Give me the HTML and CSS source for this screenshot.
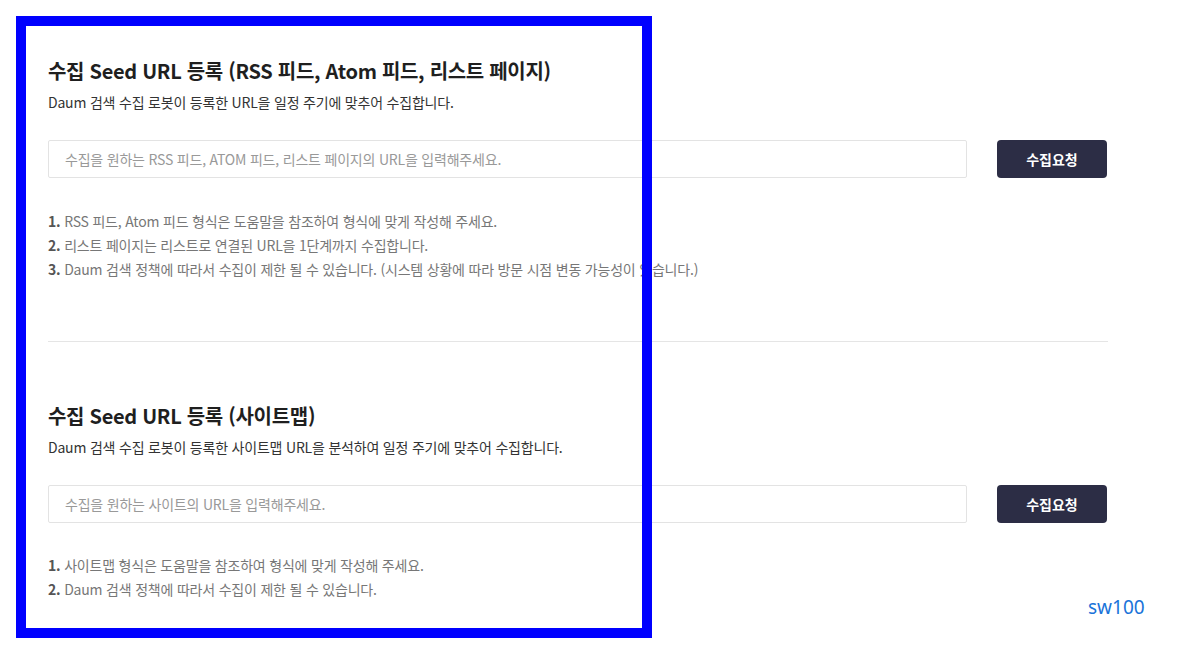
FILE: index.html
```html
<!DOCTYPE html>
<html lang="ko">
<head>
  <meta charset="UTF-8">
  <title>수집 Seed URL 등록</title>
  <link rel="stylesheet" href="styles.css">
</head>
<body>
<div class="wrap">
  <div class="section">
    <h2 class="tit">수집 Seed URL 등록 (RSS 피드, Atom 피드, 리스트 페이지)</h2>
    <p class="desc">Daum 검색 수집 로봇이 등록한 URL을 일정 주기에 맞추어 수집합니다.</p>
    <div class="form">
      <input class="inp" type="text" placeholder="수집을 원하는 RSS 피드, ATOM 피드, 리스트 페이지의 URL을 입력해주세요.">
      <button class="btn" type="button">수집요청</button>
    </div>
    <ol class="notes">
      <li><b>1.</b> RSS 피드, Atom 피드 형식은 도움말을 참조하여 형식에 맞게 작성해 주세요.</li>
      <li><b>2.</b> 리스트 페이지는 리스트로 연결된 URL을 1단계까지 수집합니다.</li>
      <li><b>3.</b> Daum 검색 정책에 따라서 수집이 제한 될 수 있습니다. (시스템 상황에 따라 방문 시점 변동 가능성이 있습니다.)</li>
    </ol>
  </div>
  <div class="section section2">
    <h2 class="tit">수집 Seed URL 등록 (사이트맵)</h2>
    <p class="desc">Daum 검색 수집 로봇이 등록한 사이트맵 URL을 분석하여 일정 주기에 맞추어 수집합니다.</p>
    <div class="form">
      <input class="inp" type="text" placeholder="수집을 원하는 사이트의 URL을 입력해주세요.">
      <button class="btn" type="button">수집요청</button>
    </div>
    <ol class="notes">
      <li><b>1.</b> 사이트맵 형식은 도움말을 참조하여 형식에 맞게 작성해 주세요.</li>
      <li><b>2.</b> Daum 검색 정책에 따라서 수집이 제한 될 수 있습니다.</li>
    </ol>
  </div>
</div>
<span class="tag">sw100</span>
<div class="mark"></div>
</body>
</html>
```
FILE: styles.css
```css
*{margin:0;padding:0;box-sizing:border-box;}
body{background:#fff;font-family:"Noto Sans CJK KR","Noto Sans",sans-serif;color:#222;}
.wrap{width:1060px;margin-left:48px;padding-top:56px;}
.section{border-bottom:1px solid #e5e5e5;padding-bottom:60px;}
.section2{border-bottom:0;padding-top:59px;}
.tit{font-size:20px;line-height:30px;font-weight:700;color:#1f1f1f;letter-spacing:-0.3px;}
.desc{margin-top:1px;font-size:14px;line-height:30px;color:#333;letter-spacing:-0.2px;}
.form{display:flex;gap:30px;margin-top:23px;}
.inp{width:919px;height:38px;border:1px solid #e3e3e3;border-radius:2px;padding:0 16px;font-family:inherit;font-size:14px;color:#333;outline:none;letter-spacing:-0.2px;}
.inp::placeholder{color:#999;}
.btn{width:110px;height:38px;border:0;border-radius:4px;background:#2c2d45;color:#fff;font-family:inherit;font-size:14px;font-weight:700;cursor:pointer;}
.notes{list-style:none;margin-top:31px;font-size:14px;line-height:24px;color:#777;letter-spacing:-0.2px;}
.notes b{color:#555;}
.section2 .notes{margin-top:30px;}
.tag{position:absolute;left:1088px;top:594px;font-family:"Noto Sans",sans-serif;font-size:19px;color:#1a73d9;}
.mark{position:absolute;left:16px;top:16px;width:636px;height:622px;border:10px solid #0000ff;}
```
